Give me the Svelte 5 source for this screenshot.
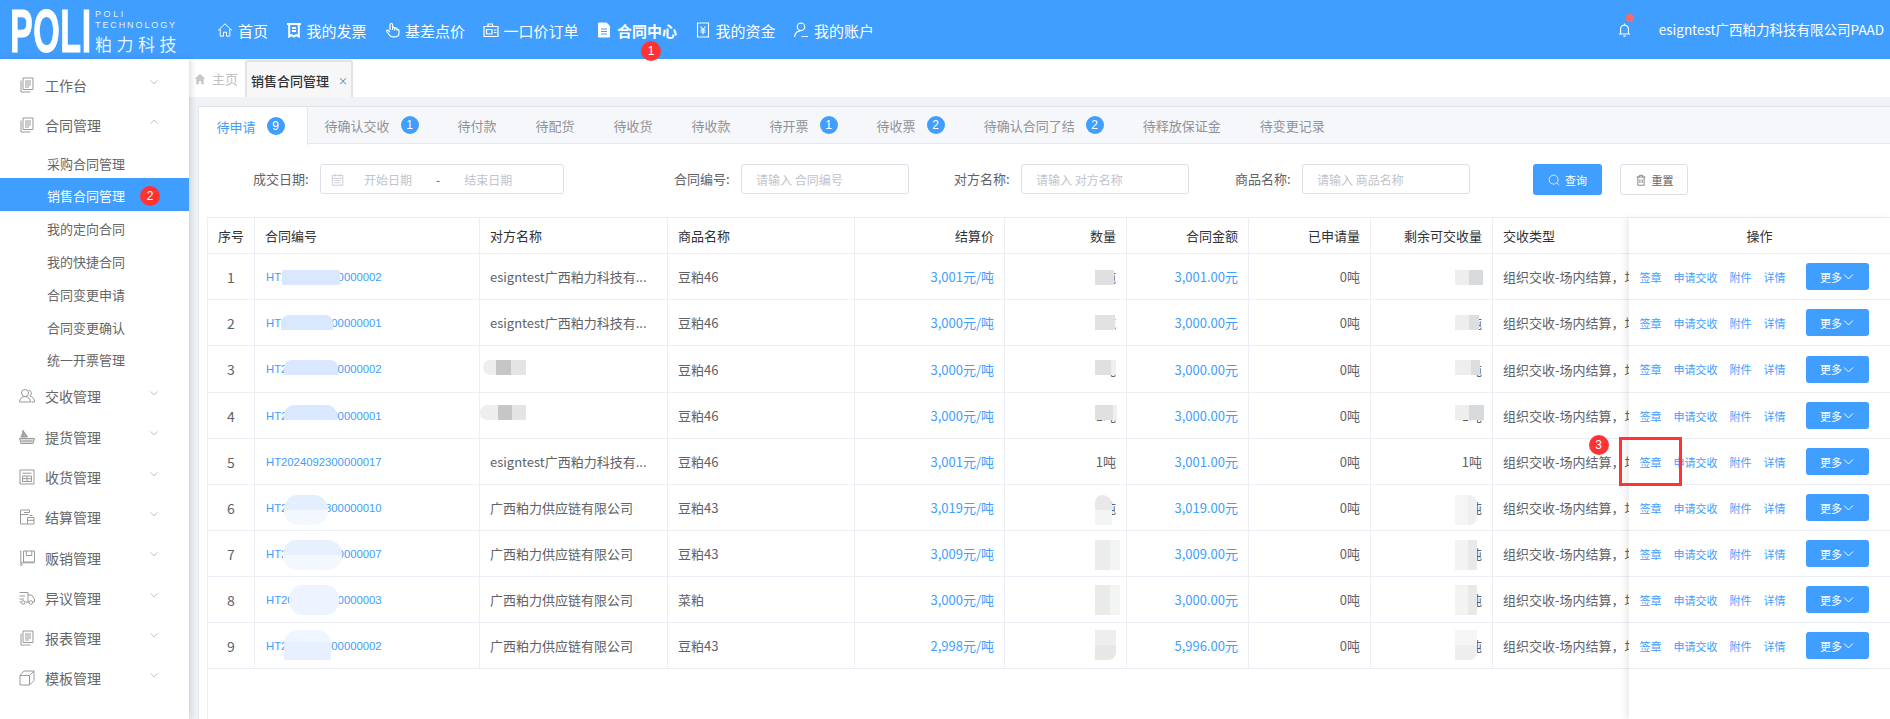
<script>
  const I = {
    home: '<path d="M1 8.500 8 1.800l7 6.700M3.200 7v7.200h3.300v-4h3v4h3.300V7"/>',
    invoice: '<path d="M1 2h14M3.200 2v12.500l2.400-1.300 2.400 1.300 2.400-1.300 2.400 1.300V2M6 6h4M6 9h4" stroke-width="2"/>',
    hand: '<path d="M6 8V2.800a1.300 1.300 0 0 1 2.600 0V8M8.600 8V6.500a1.100 1.100 0 0 1 2.200 0V8.500M10.800 8V7a1.100 1.100 0 0 1 2.200 0v1.500M13 8.500a1 1 0 0 1 2 .400v2.100c0 2.300-1.400 3.800-3.800 3.800H8.500c-1.500 0-2.500-.800-3.200-2L2.800 9.500c-.500-1 .800-1.800 1.500-1L6 10" stroke-width="1.200"/>',
    box: '<path d="M1 4.500h14v10H1zM5 4.500V2h4.500v2.500M3.500 7.500h5.500v4.500H3.500zM11 8h2.500M11 10.500h2.500" stroke-width="1.200"/>',
    doc: '<path d="M2.500 1h8l3 3v11h-11z" fill="#fff"/><path d="M5 7h6M5 9.500h6M5 12h6" stroke="#409eff"/>',
    money: '<path d="M2.500 1h11v14h-11zM5.500 4.500 8 7.500l2.500-3M5.500 8h5M5.500 10h5M8 7.500v5" stroke-width="1.100"/>',
    user: '<path d="M8 1a3.600 3.600 0 0 1 0 7.500A3.600 3.600 0 0 1 8 1zM1.500 15C2 11.300 4.500 9 7.500 8.800M8.500 14.500h6.500" stroke-width="1.200"/>',
    bell: '<path d="M2 12.800h12M3.800 12.800V7.500a4.200 4.200 0 0 1 8.400 0v5.300M6.800 15h2.400M8 1.500v2" stroke-width="1.200"/>',
    search: '<circle cx="7.500" cy="7.500" r="6"/><path d="m12 12 3 3"/>',
    trash: '<path d="M2 4h12M5.800 4V1.800h4.400V4M3.800 4v11h8.400V4M6.500 7v5M9.500 7v5"/>',
    cal: '<path d="M1.500 3h13v12h-13zM1.500 6.500h13M5 1v3.500M11 1v3.500M4 9h8M4 12h8"/>',
    down: '<path d="m2.500 5.500 5.500 5.500 5.500-5.500"/>',
    up: '<path d="m2.500 10.500 5.500-5.500 5.500 5.500"/>',
    report: '<path d="M2 3.500v11.500h9.500M4 1h10v11.500H4zM6 4h6M6 6h6M6 8h6M6 10h4"/>',
    people: '<circle cx="6" cy="5" r="3.500"/><path d="M.5 14c0-3.200 2.300-5.500 5.500-5.500s5.500 2.300 5.500 5.500zM9.800 2a3.300 3.300 0 0 1 1 6c2.700.500 4.700 2.700 4.700 6h-3"/>',
    ship: '<path d="M4 1v7M4 1.500 8.500 8H1.500" fill="#aaa"/><path d="M.5 9.500h15l-1.500 5H2zM2.500 12h11" fill="#ddd"/>',
    form: '<path d="M1 1h14v14H1zM3.500 4.200h9M3.500 7h9v5.500h-9zM8 7v5.500M3.500 9.700h9"/>',
    settle: '<path d="M8.500 15H1.500V1h9v2.500H5M1.500 5.500h8M8.500 8.500h6.500V15H8.500zM8.500 11.300h6.500M10.500 6.500h3"/>',
    sale: '<path d="M1.800 1v11.800M1 1h1M4.500 1h11v11h-11zM7.300 1v4.500h5.500V1M1.800 12.800H15.500"/><circle cx="2.300" cy="14.500" r="1"/>',
    truck: '<path d="M.5 2.500h8.500v9.500M9 5h3.500L15.500 9v3H13.500M.5 6h5.500M.5 9h4.500M.5 12h1.500M6.500 12h4"/><circle cx="4.200" cy="12.500" r="1.800"/><circle cx="11.900" cy="12.500" r="1.800"/>',
    copy: '<path d="M1 5.500h9.500V15H1zM1 5.500 5 1h10v9.500L10.500 15M10.500 5.500 15 1"/>'
  };
  const nav = [['home','首页'],['invoice','我的发票'],['hand','基差点价'],['box','一口价订单'],['doc','合同中心',true],['money','我的资金'],['user','我的账户']];
  const tabs = [['待申请',9],['待确认交收',1],['待付款'],['待配货'],['待收货'],['待收款'],['待开票',1],['待收票',2],['待确认合同了结',2],['待释放保证金'],['待变更记录']];
  const subs = ['采购合同管理','销售合同管理','我的定向合同','我的快捷合同','合同变更申请','合同变更确认','统一开票管理'];
  const menusA = [['report','工作台']];
  const menusB = [['people','交收管理'],['ship','提货管理'],['form','收货管理'],['settle','结算管理'],['sale','贩销管理'],['truck','异议管理'],['report','报表管理'],['copy','模板管理']];
  const E = 'esigntest广西粕力科技有...', G = '广西粕力供应链有限公司', Y = '组织交收-场内结算，场';
  const c1 = '#dae8ff';
  const rows = [
    ['HT2024092300000002',E,'豆粕46','3,001元/吨','3,001.00元',[[74,58,16,15,c1,'2px'],[887,19,16,15,'#e0e0e0','0'],[1247,28,16,15,'linear-gradient(90deg,#eee 50%,#d8dbde 50%)','0']]],
    ['HT2024092300000001',E,'豆粕46','3,000元/吨','3,000.00元',[[73,52,15,15,c1,'8px 8px 0 0'],[887,20,15,15,'#e2e2e2','0'],[1247,24,15,15,'linear-gradient(90deg,#eee 60%,#dcdfe2 60%)','0']]],
    ['HT2024092300000002','','豆粕46','3,000元/吨','3,000.00元',[[76,54,14,15,c1,'8px 8px 0 0'],[275,43,14,15,'linear-gradient(90deg,#eee 30%,#c6c6c6 30%,#c6c6c6 64%,#e4e4e4 64%)','7px 0 0 7px'],[887,21,14,15,'linear-gradient(90deg,#e0e0e0 75%,#efefef 75%)','0'],[1247,25,14,15,'linear-gradient(90deg,#eee 65%,#dcdfe2 65%)','0']]],
    ['HT2024092300000001','','豆粕46','3,000元/吨','3,000.00元',[[76,53,12,15,c1,'10px 10px 0 0'],[272,46,12,15,'linear-gradient(90deg,#eee 40%,#c6c6c6 40%,#c6c6c6 70%,#e4e4e4 70%)','7px 0 0 7px'],[887,22,12,15,'linear-gradient(90deg,#e0e0e0 80%,#efefef 80%)','0'],[1247,29,12,15,'linear-gradient(90deg,#eee 50%,#d8dbde 50%)','0']]],
    ['HT2024092300000017',E,'豆粕46','3,001元/吨','3,001.00元',[]],
    ['HT2024092300000010',G,'豆粕43','3,019元/吨','3,019.00元',[[76,44,10,30,'linear-gradient(#e3eeff 50%,#f3f8ff 50%)','14px'],[887,17,10,30,'linear-gradient(#e8e8e8 50%,#f3f4f4 50%)','8px 10px 0 0'],[1247,22,10,30,'linear-gradient(90deg,#f5f5f5 60%,#eef0f0 60%)','0 8px 8px 0']]],
    ['HT2024092300000007',G,'豆粕43','3,009元/吨','3,009.00元',[[75,59,9,30,'linear-gradient(#e6f0ff 50%,#f3f8ff 50%)','14px'],[887,25,9,30,'linear-gradient(90deg,#ececec 60%,#f3f4f4 60%)','0'],[1247,22,9,30,'linear-gradient(90deg,#f3f3f3 60%,#e8eaea 60%)','0']]],
    ['HT2024092300000003',G,'菜粕','3,000元/吨','3,000.00元',[[81,50,8,30,'#edf4ff','14px'],[887,25,8,30,'linear-gradient(90deg,#eaeaea 60%,#f3f4f4 60%)','0'],[1247,22,8,30,'linear-gradient(90deg,#f3f3f3 60%,#e8eaea 60%)','0']]],
    ['HT2024092300000002',G,'豆粕43','2,998元/吨','5,996.00元',[[76,47,7,30,'linear-gradient(#f0f6ff 40%,#e6f0ff 40%)','14px 14px 0 0'],[887,21,7,30,'linear-gradient(#eeeeee 50%,#e6e8e6 50%)','0 0 8px 0'],[1247,22,7,30,'linear-gradient(#f5f5f5 50%,#eeeeee 50%)','0 0 8px 0']]]
  ];
</script>

{#snippet icon(name, cls)}
  <svg class={cls} viewBox="0 0 16 16" fill="none" stroke="currentColor" stroke-width="1">{@html I[name]}</svg>
{/snippet}

<div class="app">
  <header class="top">
    <div class="logo">
      <div class="poli"><span>POLI</span></div>
      <div class="logo-side">
        <div class="l1">POLI</div>
        <div class="l2">TECHNOLOGY</div>
        <div class="l3">粕力科技</div>
      </div>
    </div>
    <nav class="nav">
      {#each nav as [ic, label, on]}
        <div class="nav-item" class:on>
          {@render icon(ic, 'ni')}
          <span>{label}</span>
          {#if on}<i class="dot n1">1</i>{/if}
        </div>
      {/each}
    </nav>
    <div class="account">
      <div class="bell">{@render icon('bell', 'bi')}<i></i></div>
      <span class="uname">esigntest广西粕力科技有限公司PAAD</span>
    </div>
  </header>

  <aside class="side">
    {#each menusA as [ic, label]}
      <div class="menu">{@render icon(ic, 'mi')}<span>{label}</span>{@render icon('down', 'chev')}</div>
    {/each}
    <div class="menu">{@render icon('report', 'mi')}<span>合同管理</span>{@render icon('up', 'chev')}</div>
    <div class="subs">
      {#each subs as s, i}
        <div class="sub" class:active={i === 1}>{s}{#if i === 1}<i class="dot n2">2</i>{/if}</div>
      {/each}
    </div>
    {#each menusB as [ic, label]}
      <div class="menu">{@render icon(ic, 'mi')}<span>{label}</span>{@render icon('down', 'chev')}</div>
    {/each}
  </aside>

  <main class="main">
    <div class="crumbs">
      <div class="crumb-home">
        <svg viewBox="0 0 16 16" class="hi"><path d="M8 1 1 8h2v7h3.500v-4h3v4H13V8h2z" fill="#c8c8c8"/></svg>
        <span>主页</span>
      </div>
      <div class="crumb-tab"><b>销售合同管理</b><span class="x">×</span></div>
    </div>
    <section class="card">
      <div class="tabs">
        {#each tabs as [t, n], i}
          <div class="tab" class:cur={i === 0}>{t}{#if n}<em>{n}</em>{/if}</div>
        {/each}
      </div>
      <div class="filters">
        <label class="lb l-date">成交日期:</label>
        <div class="inp date">
          {@render icon('cal', 'ci')}
          <span class="ph p1">开始日期</span><span class="dash">-</span><span class="ph p2">结束日期</span>
        </div>
        <label class="lb l-no">合同编号:</label>
        <div class="inp txt"><span class="ph">请输入 合同编号</span></div>
        <label class="lb l-name">对方名称:</label>
        <div class="inp txt"><span class="ph">请输入 对方名称</span></div>
        <label class="lb l-goods">商品名称:</label>
        <div class="inp txt"><span class="ph">请输入 商品名称</span></div>
        <button class="btn pri">{@render icon('search', 'bti')}查询</button>
        <button class="btn def">{@render icon('trash', 'bti')}重置</button>
      </div>
      <div class="table">
        <div class="t-main">
          <div class="tr th">
            <div class="c ctr">序号</div><div class="c">合同编号</div><div class="c">对方名称</div><div class="c">商品名称</div>
            <div class="c rt">结算价</div><div class="c rt">数量</div><div class="c rt">合同金额</div><div class="c rt">已申请量</div><div class="c rt">剩余可交收量</div><div class="c">交收类型</div>
          </div>
          {#each rows as r, i}
            <div class="tr td">
              <div class="c ctr num">{i + 1}</div>
              <div class="c link code">{r[0]}</div>
              <div class="c">{r[1]}</div>
              <div class="c">{r[2]}</div>
              <div class="c rt link">{r[3]}</div>
              <div class="c rt">1吨</div>
              <div class="c rt link">{r[4]}</div>
              <div class="c rt">0吨</div>
              <div class="c rt">1吨</div>
              <div class="c clip">{Y}</div>
              {#each r[5] as b}
                <i class="blur" style="left:{b[0]}px;width:{b[1]}px;top:{b[2]}px;height:{b[3]}px;background:{b[4]};border-radius:{b[5]}"></i>
              {/each}
            </div>
          {/each}
        </div>
        <div class="t-fix">
          <div class="fh">操作</div>
          {#each rows as r, i}
            <div class="fr">
              <a>签章{#if i === 4}<i class="dot n3">3</i><i class="mark"></i>{/if}</a><a>申请交收</a><a>附件</a><a>详情</a>
              <button class="more">更多<svg viewBox="0 0 16 16" fill="none" stroke="currentColor" stroke-width="1.200"><path d="m2.500 5.500 5.500 5.500 5.500-5.500"/></svg></button>
            </div>
          {/each}
        </div>
      </div>
    </section>
  </main>
</div>

<style>
  :global(body) { margin: 0; overflow: hidden; }
  .app {
    width: 1890px; height: 719px; overflow: hidden;
    display: grid; grid-template-columns: 189px 1fr; grid-template-rows: 59px 1fr;
    font-family: "Noto Sans CJK SC", "Noto Sans", sans-serif; font-size: 13px; color: #606266;
    background: #f0f2f5;
  }
  i, em { font-style: normal; }
  .top { grid-column: 1 / 3; background: #409eff; color: #fff; display: flex; align-items: center; position: relative; }
  .logo { width: 189px; height: 59px; display: flex; flex: none; box-sizing: border-box; padding-left: 10px; }
  .poli { width: 85px; height: 59px; flex: none; }
  .poli span {
    display: block; transform-origin: left top; transform: scaleX(.55);
    font: 700 62px/62px "Liberation Sans", sans-serif; letter-spacing: 1px; color: #fff;
    -webkit-text-stroke: 1px #fff; filter: blur(.6px);
  }
  .logo-side { color: rgba(255,255,255,.88); }
  .l1, .l2 { font: 9px/11px "Liberation Sans", sans-serif; }
  .l1 { letter-spacing: 2.600px; margin-top: 8.500px; }
  .l2 { letter-spacing: 1.900px; }
  .l3 { font-size: 17px; line-height: 24px; letter-spacing: 4.500px; margin-top: 1.500px; white-space: nowrap; }
  .nav { display: flex; gap: 17.500px; padding-left: 28px; }
  .nav-item { display: flex; align-items: center; gap: 5px; font-size: 15px; position: relative; white-space: nowrap; margin-top: 1px; }
  .nav-item.on { font-weight: 700; }
  .ni { width: 16px; height: 16px; flex: none; }
  .dot { position: absolute; width: 20px; height: 20px; border-radius: 50%; background: #ff3333; color: #fff; font: 12px/20px "Liberation Sans", sans-serif; text-align: center; }
  .n1 { left: 45px; top: 21px; }
  .account { margin-left: auto; display: flex; align-items: center; padding-right: 6px; }
  .bell { position: relative; width: 15px; height: 15px; margin-right: 27px; }
  .bi { width: 15px; height: 15px; display: block; }
  .bell i { position: absolute; width: 8px; height: 8px; border-radius: 50%; background: #f56c6c; left: 9px; top: -8px; }
  .uname { font-size: 13.500px; margin-top: -2px; white-space: nowrap; }

  .side { background: #fff; padding-top: 6px; box-sizing: border-box; position: relative; z-index: 2; box-shadow: 2px 0 6px rgba(40,60,100,.18); color: #666; }
  .menu { height: 40.300px; display: flex; align-items: center; font-size: 14px; padding-left: 19px; box-sizing: border-box; position: relative; }
  .mi { width: 16px; height: 16px; color: #999; flex: none; margin-right: 10px; }
  .chev { position: absolute; left: 149px; top: 12px; width: 10px; height: 10px; color: #999; }
  .subs { margin-bottom: 1px; }
  .sub { height: 32.800px; line-height: 36.800px; padding-left: 47px; font-size: 13px; position: relative; box-sizing: border-box; }
  .sub.active { background: #409eff; color: #fff; }
  .n2 { left: 140px; top: 8px; }

  .main { display: flex; flex-direction: column; min-width: 0; }
  .crumbs { height: 38px; background: #fff; display: flex; flex: none; align-items: flex-end; box-sizing: border-box; padding-left: 5px; }
  .crumb-home { width: 51px; height: 37px; display: flex; align-items: center; color: #c0c0c0; gap: 6px; }
  .hi { width: 12px; height: 12px; }
  .crumb-tab {
    width: 108px; height: 37px; box-sizing: border-box; background: #f7f7f7; border: 2px solid #e3e3e3; border-bottom: 0; border-radius: 3px 3px 0 0;
    display: flex; align-items: center; padding: 2px 0 0 4px; color: #303133; white-space: nowrap;
  }
  .crumb-tab b { font-weight: 500; }
  .x { margin-left: 9px; font-size: 10px; color: #777; }

  .card { margin: 9px 0 0 9px; flex: 1; background: #fff; border-left: 1px solid #e4e7ed; min-height: 0; display: flex; flex-direction: column; }
  .tabs { height: 38px; flex: none; background: #f5f7fa; display: flex; border-top: 1px solid #e1e3e8; border-bottom: 1px solid #e4e7ed; box-sizing: border-box; color: #909399; }
  .tab { padding: 0 19.500px; display: flex; align-items: center; white-space: nowrap; }
  .tab:first-child { padding-left: 17.500px; padding-right: 22px; }
  .tab:nth-child(2) { padding-left: 17px; }
  .tab.cur { background: #fff; color: #409eff; height: 38px; border-right: 1px solid #e4e7ed; box-sizing: border-box; }
  .tab em { width: 18px; height: 18px; border-radius: 50%; background: #409eff; color: #fff; font: 12px/18px "Liberation Sans", sans-serif; text-align: center; margin-left: 11px; }

  .filters { height: 73px; flex: none; display: flex; align-items: flex-start; padding-top: 20px; box-sizing: border-box; }
  .lb { line-height: 30px; white-space: nowrap; font-size: 13px; flex: none; }
  .l-date { margin-left: 54px; width: 67px; }
  .l-no { margin-left: 110px; width: 67px; }
  .l-name { margin-left: 45px; width: 67px; }
  .l-goods { margin-left: 46px; width: 67px; }
  .inp { height: 30px; box-sizing: border-box; border: 1px solid #dcdfe6; border-radius: 3px; display: flex; align-items: center; flex: none; font-size: 12px; }
  .ph { color: #c0c4cc; white-space: nowrap; }
  .date { width: 244px; padding-left: 10px; }
  .ci { width: 13px; height: 13px; color: #c0c4cc; }
  .p1 { margin-left: 20px; }
  .dash { margin-left: 24px; color: #606266; }
  .p2 { margin-left: 24px; }
  .txt { width: 168px; padding-left: 14px; }
  .btn { height: 31px; box-sizing: border-box; border-radius: 3px; font-family: inherit; font-size: 11px; display: flex; align-items: center; justify-content: center; gap: 5px; padding: 0; flex: none; }
  .bti { width: 12px; height: 12px; }
  .pri { width: 69px; margin-left: 63px; background: #409eff; border: 0; color: #fff; }
  .def { width: 68px; margin-left: 18px; background: #fff; border: 1px solid #dcdfe6; color: #606266; }

  .table { margin-left: 8px; flex: 1; min-height: 0; display: flex; border-left: 1px solid #ebeef5; background: #fff; border-top: 1px solid #ebeef5; box-sizing: border-box; }
  .t-main { width: 1421px; overflow: hidden; flex: none; }
  .tr { display: grid; grid-template-columns: 47px 225px 188px 187px 150px 122px 122px 122px 122px 160px; width: 1445px; border-bottom: 1px solid #ebeef5; box-sizing: border-box; position: relative; }
  .th { height: 36px; color: #303133; }
  .td { height: 46px; }
  .td:nth-child(4) { height: 47px; }
  .c { border-right: 1px solid #ebeef5; padding: 0 10px; display: flex; align-items: center; white-space: nowrap; overflow: hidden; box-sizing: border-box; min-width: 0; }
  .ctr { justify-content: center; padding: 0; }
  .rt { justify-content: flex-end; }
  .num { font-size: 14px; }
  .link { color: #409eff; }
  .code { font: 11.300px "Liberation Sans", sans-serif; padding-left: 11px; }
  .clip { border-right: 0; padding-right: 0; overflow: visible; }
  .blur { position: absolute; display: block; }
  .t-fix { flex: 1; min-width: 0; background: #fff; position: relative; box-shadow: -4px 0 6px rgba(0,0,0,.07); }
  .fh { height: 36px; border-bottom: 1px solid #ebeef5; box-sizing: border-box; display: flex; align-items: center; justify-content: center; color: #303133; }
  .fr { height: 46px; border-bottom: 1px solid #ebeef5; box-sizing: border-box; display: flex; align-items: center; padding-left: 10.500px; font-size: 11px; color: #409eff; position: relative; }
  .fr:nth-child(4) { height: 47px; }
  .fr a { margin-right: 12px; position: relative; white-space: nowrap; }
  .more { width: 63px; height: 27px; margin-left: 8.500px; border: 0; border-radius: 3px; background: #409eff; color: #fff; font-family: inherit; font-size: 11px; display: flex; align-items: center; justify-content: center; padding: 0; }
  .more svg { width: 13px; height: 13px; }
  .n3 { left: -51px; top: -19px; }
  .mark { position: absolute; left: -21px; top: -17px; width: 63px; height: 49px; box-sizing: border-box; border: 3px solid #f33; z-index: 3; }
</style>
